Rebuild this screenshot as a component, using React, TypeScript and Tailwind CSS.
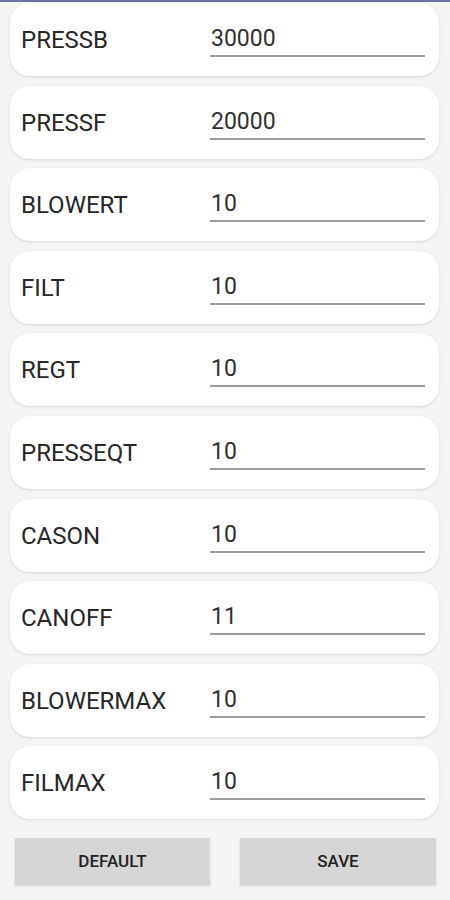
const fields = [
  { name: 'PRESSB', value: '30000' },
  { name: 'PRESSF', value: '20000' },
  { name: 'BLOWERT', value: '10' },
  { name: 'FILT', value: '10' },
  { name: 'REGT', value: '10' },
  { name: 'PRESSEQT', value: '10' },
  { name: 'CASON', value: '10' },
  { name: 'CANOFF', value: '11' },
  { name: 'BLOWERMAX', value: '10' },
  { name: 'FILMAX', value: '10' },
];

function ParamCard({ name, value }: { name: string; value: string }) {
  return (
    <div className="ml-[10px] mr-[11px] h-[73px] rounded-[20px] bg-white shadow-[0_1px_3px_rgba(0,0,0,0.13)] flex items-start">
      <div className="w-[200px] pl-[11px] pt-[25px] text-[24px] font-normal text-[#262626] leading-none whitespace-nowrap">
        {name}
      </div>
      <div className="w-[215px] flex flex-col">
        <div className="pt-[24px] pl-[1px] text-[23px] font-normal text-[#303030] leading-[24px]">{value}</div>
        <div className="mt-[4px] h-[2px] bg-[#9c9c9c]" />
      </div>
    </div>
  );
}

export default function App() {
  return (
    <div
      className="w-[450px] h-[900px] bg-[#f5f5f5] overflow-hidden"
      style={{ fontFamily: 'Roboto, "Noto Sans", sans-serif' }}
    >
      <div className="h-[2px] bg-[#6b72a6]" />
      <div className="pt-[1px] flex flex-col gap-[9.6px]">
        {fields.map((f) => (
          <ParamCard key={f.name} name={f.name} value={f.value} />
        ))}
      </div>
      <div className="flex justify-between pl-[15px] pr-[14px] mt-[18.6px]">
        <button className="w-[195px] h-[47px] bg-[#d6d6d6] text-[17px] font-medium text-[#222] shadow-[0_1px_2px_rgba(0,0,0,0.15)]">
          DEFAULT
        </button>
        <button className="w-[196px] h-[47px] bg-[#d6d6d6] text-[17px] font-medium text-[#222] shadow-[0_1px_2px_rgba(0,0,0,0.15)]">
          SAVE
        </button>
      </div>
    </div>
  );
}
